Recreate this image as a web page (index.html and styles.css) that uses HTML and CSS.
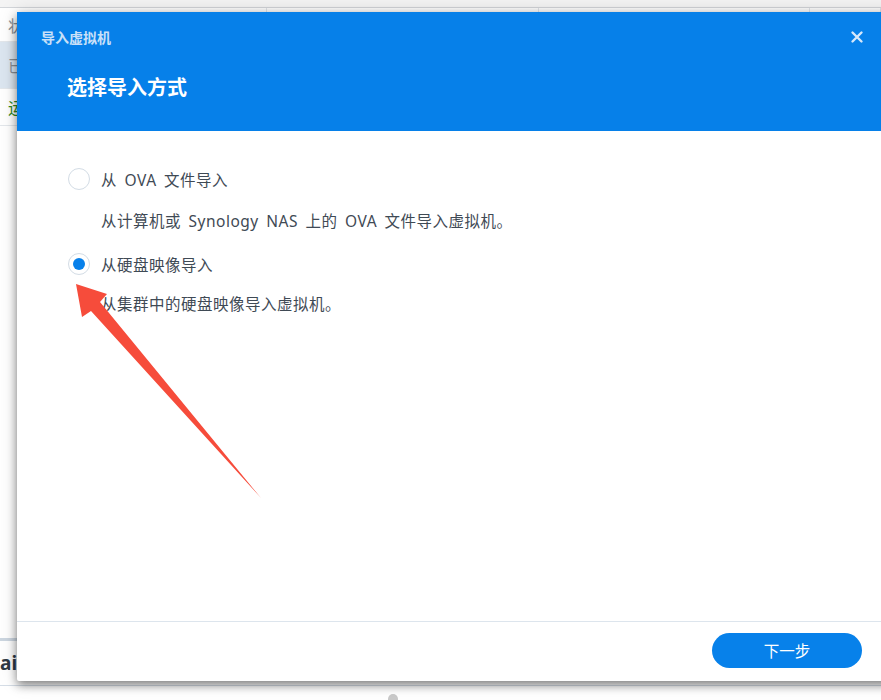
FILE: index.html
```html
<!DOCTYPE html>
<html lang="zh-CN">
<head>
  <meta charset="UTF-8">
  <title>导入虚拟机</title>
  <link rel="stylesheet" href="styles.css">
</head>
<body>

<div class="desktop">
  <div class="topbar"></div>
  <div class="table">
    <div class="row head">
      <div class="cell">状态</div><div class="cell"></div><div class="cell"></div><div class="cell"></div>
    </div>
    <div class="row selected">
      <div class="cell">已停止</div><div class="cell"></div><div class="cell"></div><div class="cell"></div>
    </div>
    <div class="row">
      <div class="cell running">运行中</div><div class="cell"></div><div class="cell"></div><div class="cell"></div>
    </div>
  </div>
  <div class="spacer"></div>
  <div class="bottom-row">
    <span class="mail">ail</span>
  </div>
  <div class="dot"></div>
</div>

<div class="dialog">
  <div class="dialog-header">
    <div class="dialog-caption">
      <span>导入虚拟机</span>
      <svg class="close" width="14" height="14" viewBox="0 0 14 14">
        <path d="M2.5 2.5 L11.5 11.5 M11.5 2.5 L2.5 11.5" stroke="#d6e8fb" stroke-width="2.4" stroke-linecap="round"/>
      </svg>
    </div>
    <h1 class="step-title">选择导入方式</h1>
  </div>

  <div class="dialog-body">
    <label class="option">
      <span class="radio"></span>
      <span class="option-label">从 OVA 文件导入</span>
    </label>
    <p class="option-desc">从计算机或 Synology NAS 上的 OVA 文件导入虚拟机。</p>

    <label class="option">
      <span class="radio checked"></span>
      <span class="option-label">从硬盘映像导入</span>
    </label>
    <p class="option-desc">从集群中的硬盘映像导入虚拟机。</p>
  </div>

  <div class="dialog-footer">
    <button class="btn-next">下一步</button>
  </div>
</div>

<!-- annotation arrow -->
<svg class="arrow" width="881" height="700" viewBox="0 0 881 700">
  <polygon points="76,284 107,294 100,302 261,498 91,311 82,317" fill="#f64c3b"/>
</svg>

</body>
</html>
```

FILE: styles.css
```css
* { box-sizing: border-box; }

body {
  margin: 0;
  width: 881px;
  height: 700px;
  overflow: hidden;
  position: relative;
  font-family: "Noto Sans", "Noto Sans CJK SC", sans-serif;
  background: #fff;
}

.desktop {
  display: flex;
  flex-direction: column;
  height: 700px;
  background: #fff;
}

.topbar {
  height: 8px;
  background: #f4f4f4;
  border-bottom: 1px solid #d3d6da;
}

.table { display: flex; flex-direction: column; }

.row {
  display: grid;
  grid-template-columns: 267px 272px 271px 1fr;
  height: 37px;
  border-bottom: 1px solid #e3e7eb;
  align-items: center;
}

.row.head { height: 34px; }
.row.head .cell { border-right: 1px solid #e3e6ea; height: 100%; display: flex; align-items: center; }
.row.selected { background: #dce6f0; height: 47px; }

.cell {
  padding-left: 8px;
  font-size: 16px;
  color: #8a8f95;
  white-space: nowrap;
}

.cell.running { color: #2f8a1e; }

.spacer { flex: 1; }

.bottom-row {
  height: 48px;
  border-top: 3px solid #ccd6e0;
  border-bottom: 1px solid #d5dde6;
  display: flex;
  align-items: center;
  margin-bottom: 14px;
}

.mail {
  margin-left: 0;
  font-size: 19px;
  font-weight: bold;
  color: #2f3a45;
}

.dot {
  position: absolute;
  left: 388px;
  top: 694px;
  width: 10px;
  height: 10px;
  border-radius: 50%;
  background: #c9c9c9;
}

.dialog {
  position: absolute;
  left: 17px;
  top: 12px;
  width: 900px;
  height: 669px;
  background: #fff;
  display: flex;
  flex-direction: column;
  box-shadow: 0 4px 10px rgba(0, 0, 0, 0.45), 0 0 20px rgba(0, 0, 0, 0.15);
  border-radius: 2px;
}

.dialog-header {
  height: 119px;
  background: #0680e9;
  padding: 0 0 0 24px;
}

.dialog-caption {
  height: 49px;
  display: flex;
  align-items: center;
  justify-content: space-between;
  padding-right: 53px;
  font-size: 14px;
  font-weight: bold;
  color: #c9e0f8;
}

.close { margin-top: 1px; }

.step-title {
  margin: 13px 0 0 26px;
  font-size: 20px;
  font-weight: bold;
  color: #fff;
  line-height: 28px;
}

.dialog-body {
  flex: 1;
  padding: 36px 0 0 51px;
}

.option {
  display: flex;
  align-items: center;
  gap: 11px;
  height: 24px;
}

.radio {
  width: 22px;
  height: 22px;
  border-radius: 50%;
  border: 1px solid #d3dce5;
  background: #fff;
  display: flex;
  align-items: center;
  justify-content: center;
}

.radio.checked::after {
  content: "";
  width: 12px;
  height: 12px;
  border-radius: 50%;
  background: #0780ea;
}

.option-label,
.option-desc {
  font-size: 15.5px;
  color: #3f4a55;
  letter-spacing: 0.5px;
  word-spacing: 3px;
}

.option-desc {
  margin: 18px 0 19px 33px;
  line-height: 24px;
}

.option + .option-desc + .option + .option-desc { margin-top: 16px; }

.dialog-footer {
  height: 60px;
  border-top: 1px solid #dde5ed;
  padding: 11px 0 0 695px;
}

.btn-next {
  width: 150px;
  height: 35px;
  border: none;
  border-radius: 18px;
  background: #0781ea;
  color: #fff;
  font-family: inherit;
  font-size: 15.5px;
  cursor: pointer;
}

.arrow {
  position: absolute;
  left: 0;
  top: 0;
  pointer-events: none;
}
```
